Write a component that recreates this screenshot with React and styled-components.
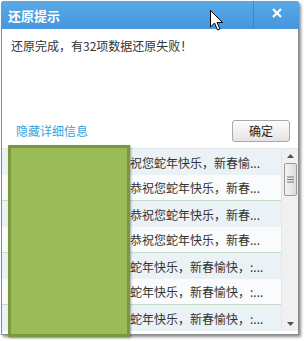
import React from 'react';
import styled, { createGlobalStyle } from 'styled-components';

const GlobalStyle = createGlobalStyle`
  html, body { margin: 0; padding: 0; background: #ffffff; }
  body { font-family: "Noto Sans CJK SC", "Noto Sans", sans-serif; font-size: 12px; color: #333; }
`;

const Page = styled.div`
  position: relative;
  width: 304px;
  height: 341px;
  overflow: hidden;
  background: #ffffff;
  padding: 1px 0 0 1px;
  box-sizing: border-box;
`;

const Dialog = styled.div`
  width: 298px;
  height: 334px;
  display: flex;
  flex-direction: column;
  background: #ffffff;
  border: 1px solid #8a8a8a;
  border-top: none;
  border-radius: 3px 3px 0 0;
  box-sizing: border-box;
  box-shadow: 2px 2px 3px rgba(0, 0, 0, 0.45);
`;

const TitleBar = styled.div`
  height: 28px;
  display: flex;
  align-items: stretch;
  background: linear-gradient(#5aa9e6, #4596dc);
  border-radius: 3px 3px 0 0;
  margin: 0 -1px;
`;

const Title = styled.div`
  flex: 1;
  display: flex;
  align-items: center;
  padding-left: 7px;
  color: #fff;
  font-weight: bold;
  font-size: 13px;
`;

const CloseBtn = styled.div`
  width: 45px;
  display: flex;
  align-items: center;
  justify-content: center;
  border-left: 1px solid #3f86c4;
  color: #fff;
  padding-bottom: 4px;
`;

const Body = styled.div`
  flex: 1;
  display: flex;
  flex-direction: column;
  min-height: 0;
`;

const Message = styled.div`
  margin: 9px 0 0 9px;
  line-height: 16px;
  font-size: 12px;
  color: #333;
`;

const ActionRow = styled.div`
  margin-top: 66px;
  height: 21px;
  display: flex;
  align-items: center;
  justify-content: space-between;
  padding: 0 8px 0 14px;
`;

const Link = styled.span`
  color: #37a2dc;
  font-size: 12px;
`;

const Button = styled.div`
  width: 58px;
  height: 22px;
  box-sizing: border-box;
  display: flex;
  align-items: center;
  justify-content: center;
  border: 1px solid #a9a9a9;
  border-radius: 3px;
  background: linear-gradient(#fdfdfd, #e4e4e4);
  font-size: 12px;
  color: #222;
`;

const List = styled.div`
  margin-top: 7px;
  height: 182px;
  display: flex;
  border-top: 1px solid #e3e8ea;
`;

const Rows = styled.div`
  flex: 1;
  overflow: hidden;
`;

const Row = styled.div`
  height: 26px;
  box-sizing: border-box;
  display: flex;
  align-items: center;
  background: ${({ $alt }) => ($alt ? '#f9fbfc' : '#ebf2f5')};
  border-bottom: ${({ $alt }) => ($alt ? '1px solid #c5dccb' : 'none')};
`;

const NameCell = styled.div`
  width: 128px;
  flex: none;
`;

const TextCell = styled.div`
  flex: 1;
  white-space: nowrap;
  overflow: hidden;
  color: #333;
  font-size: 12px;
`;

const ScrollBar = styled.div`
  width: 16px;
  display: flex;
  flex-direction: column;
  align-items: center;
  background: #f0f0f0;
  border-left: 1px solid #e6e6e6;
`;

const Arrow = styled.div`
  height: 14px;
  display: flex;
  align-items: center;
  justify-content: center;
`;

const Thumb = styled.div`
  width: 13px;
  height: 33px;
  box-sizing: border-box;
  border: 1px solid #9a9a9a;
  border-radius: 2px;
  background: linear-gradient(90deg, #f4f4f4, #dcdcdc);
  display: flex;
  align-items: center;
  justify-content: center;
`;

const Track = styled.div`
  flex: 1;
`;

const Redaction = styled.div`
  position: absolute;
  left: 8px;
  top: 145px;
  width: 122px;
  height: 192px;
  box-sizing: border-box;
  background: #9bbb59;
  border: 3px solid #789a3a;
  box-shadow: 1px 1px 2px rgba(0, 0, 0, 0.35);
`;

const Cursor = styled.svg`
  position: absolute;
  left: 210px;
  top: 10px;
`;

const rows = [
  '祝您蛇年快乐，新春愉...',
  '恭祝您蛇年快乐，新春...',
  '恭祝您蛇年快乐，新春...',
  '恭祝您蛇年快乐，新春...',
  '蛇年快乐，新春愉快，:...',
  '蛇年快乐，新春愉快，:...',
  '蛇年快乐，新春愉快，:...',
];

export default function App() {
  return (
    <Page>
      <GlobalStyle />
      <Dialog>
        <TitleBar>
          <Title>还原提示</Title>
          <CloseBtn>
            <svg width="10" height="10" viewBox="0 0 10 10">
              <path d="M1 1 L9 9 M9 1 L1 9" stroke="#fff" strokeWidth="2.2" />
            </svg>
          </CloseBtn>
        </TitleBar>
        <Body>
          <Message>还原完成，有32项数据还原失败！</Message>
          <ActionRow>
            <Link>隐藏详细信息</Link>
            <Button>确定</Button>
          </ActionRow>
          <List>
            <Rows>
              {rows.map((t, i) => (
                <Row key={i} $alt={i % 2 === 1}>
                  <NameCell />
                  <TextCell>{t}</TextCell>
                </Row>
              ))}
            </Rows>
            <ScrollBar>
              <Arrow>
                <svg width="7" height="4" viewBox="0 0 7 4"><path d="M0 4 L3.5 0 L7 4 Z" fill="#555" /></svg>
              </Arrow>
              <Thumb>
                <svg width="7" height="7" viewBox="0 0 7 7">
                  <path d="M0 1 H7 M0 3.5 H7 M0 6 H7" stroke="#777" strokeWidth="1" />
                </svg>
              </Thumb>
              <Track />
              <Arrow>
                <svg width="7" height="4" viewBox="0 0 7 4"><path d="M0 0 L7 0 L3.5 4 Z" fill="#555" /></svg>
              </Arrow>
            </ScrollBar>
          </List>
        </Body>
      </Dialog>
      <Redaction />
      <Cursor width="13" height="21" viewBox="0 0 13 21">
        <path d="M0.5 0.5 V17 L4.5 13 L7.5 20 L10 19 L7 12.5 H12.5 Z" fill="#fff" stroke="#000" strokeWidth="1" strokeLinejoin="round" />
      </Cursor>
    </Page>
  );
}
